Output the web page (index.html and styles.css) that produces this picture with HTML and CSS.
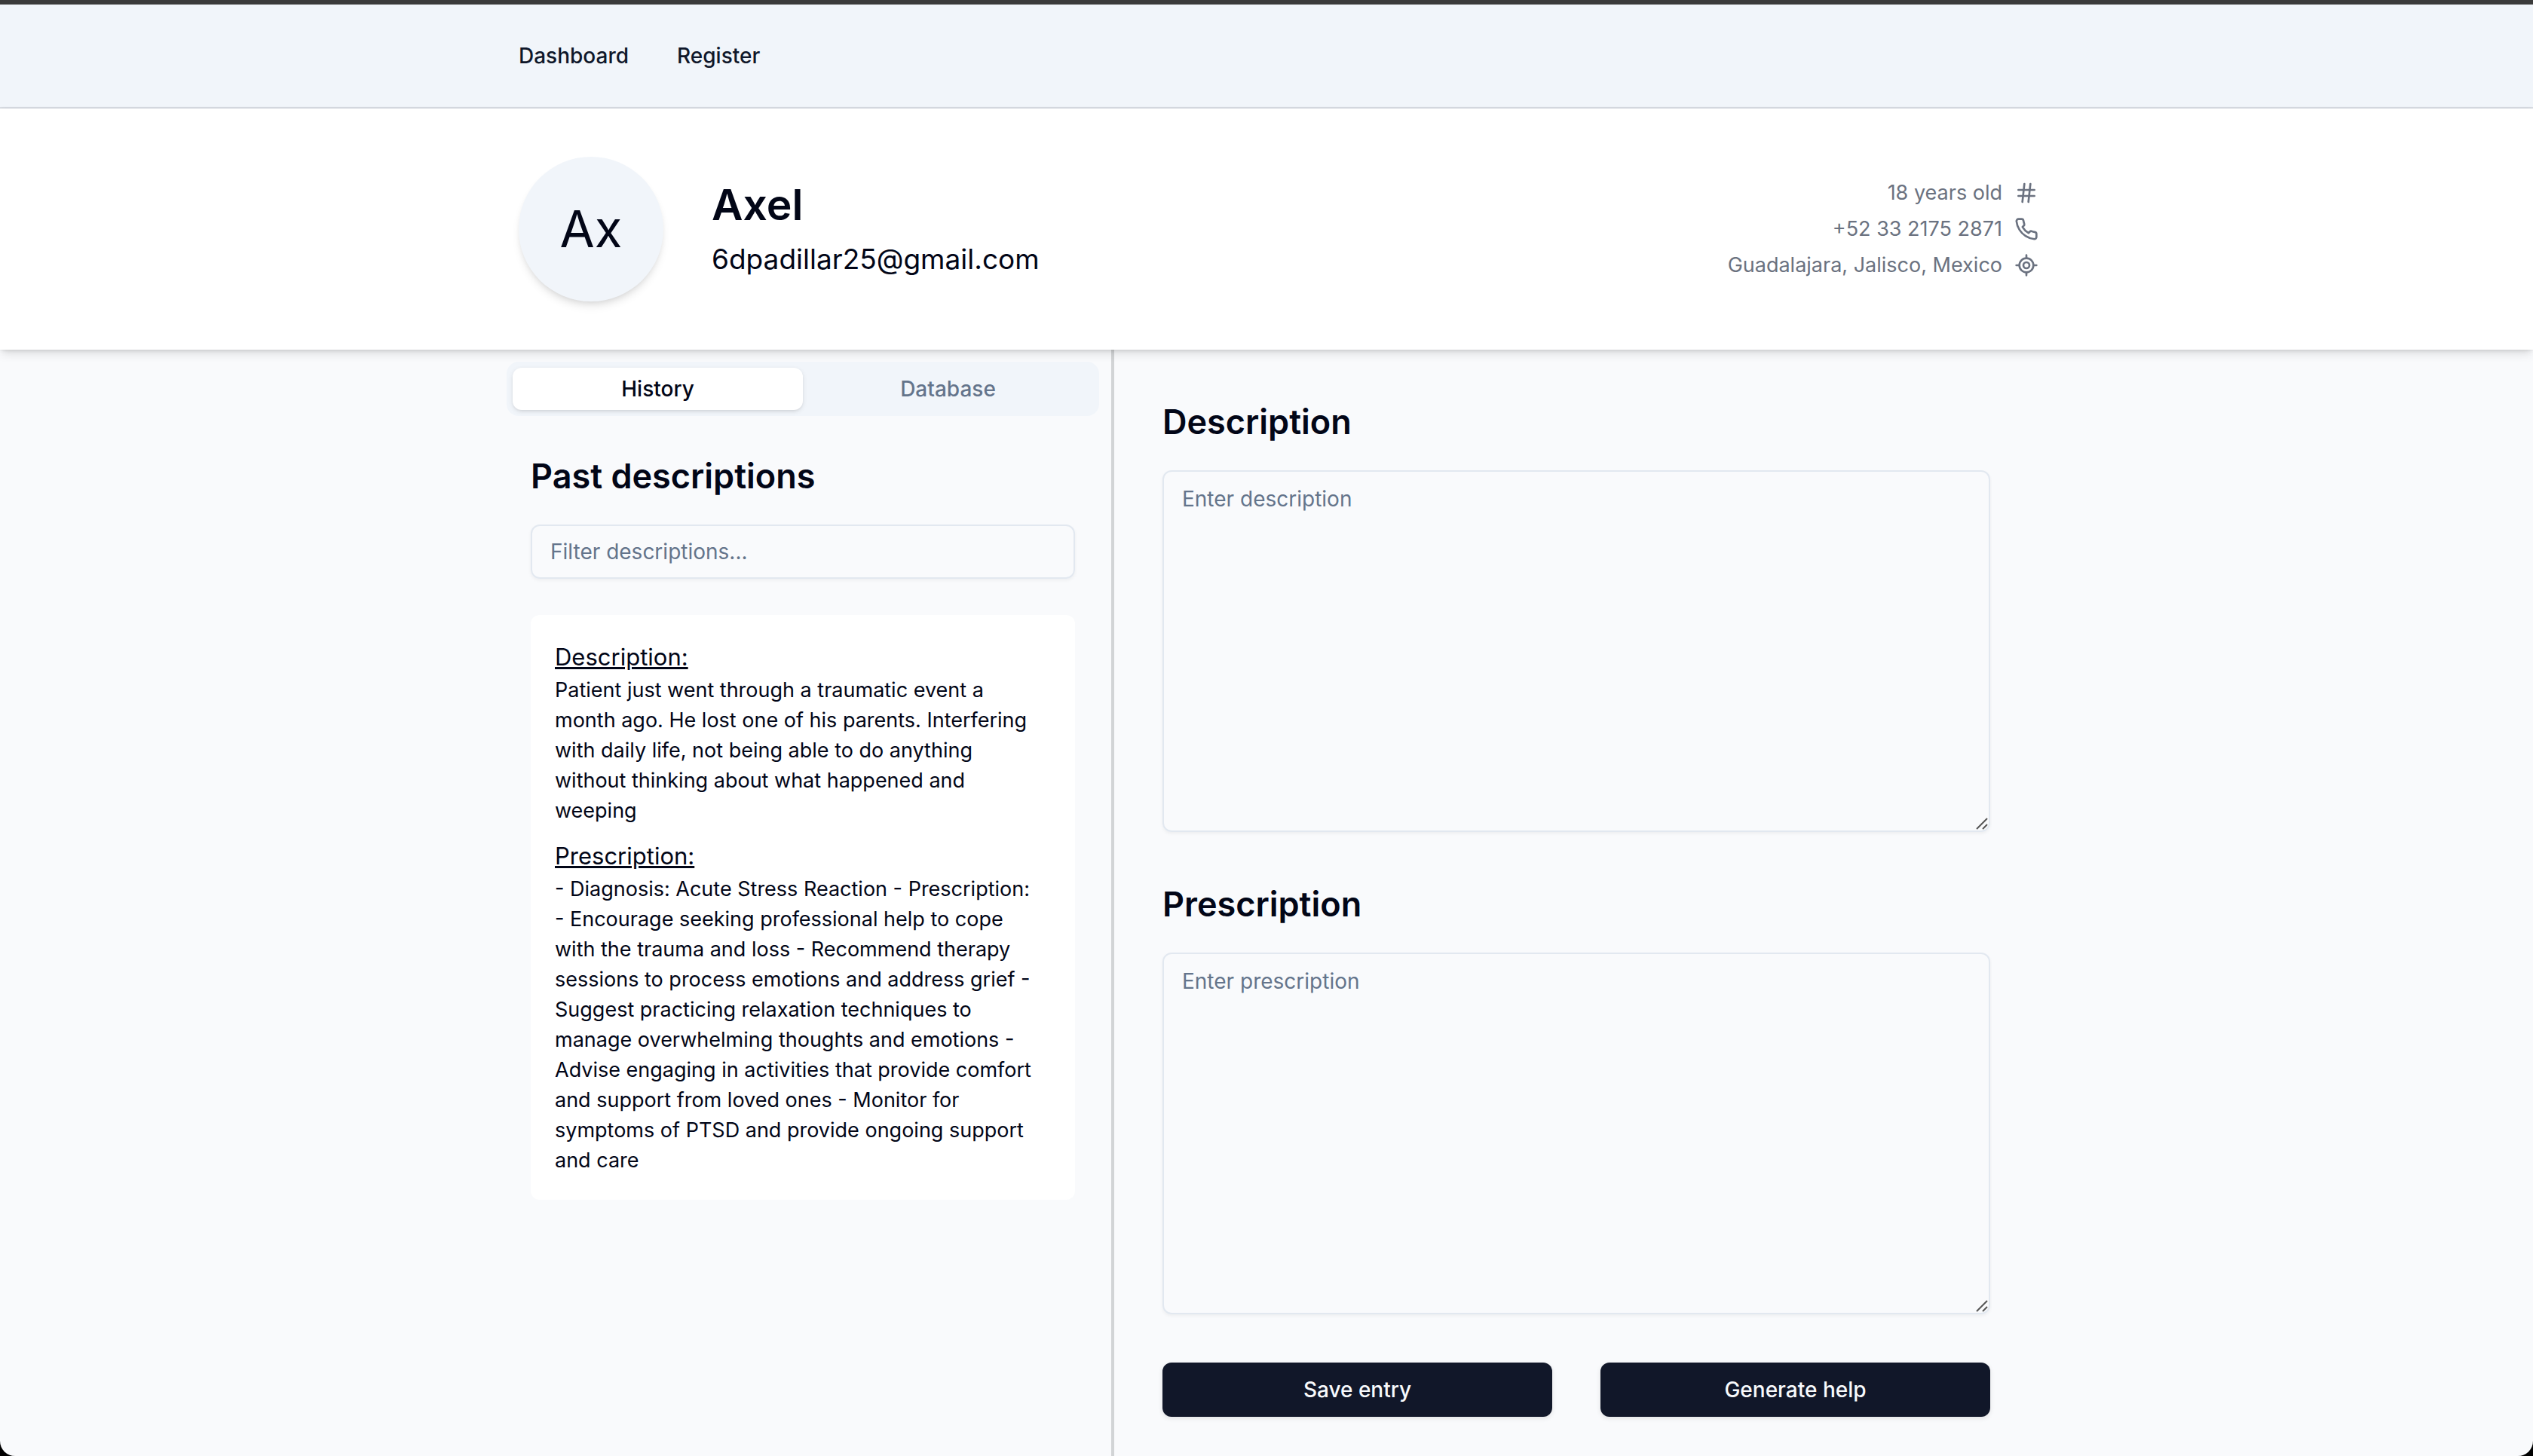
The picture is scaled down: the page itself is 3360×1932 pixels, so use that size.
FILE: index.html
```html
<!DOCTYPE html>
<html lang="en">
<head>
<meta charset="utf-8">
<meta name="viewport" content="width=device-width, initial-scale=1">
<title>Axel</title>
<link rel="stylesheet" href="styles.css">
</head>
<body>
<header class="topbar">
  <nav class="container topbar-nav">
    <a class="nav-link" href="#dashboard">Dashboard</a>
    <a class="nav-link" href="#register">Register</a>
  </nav>
</header>

<section class="profile">
  <div class="container profile-inner">
    <div class="avatar">Ax</div>
    <div class="identity">
      <h1 class="name">Axel</h1>
      <p class="email">6dpadillar25@gmail.com</p>
    </div>
    <ul class="facts">
      <li class="fact">18 years old
        <svg class="icon" viewBox="0 0 24 24" aria-hidden="true"><path d="M4 9h16M4 15h16M10 3L8 21M16 3l-2 18"/></svg>
      </li>
      <li class="fact">+52 33 2175 2871
        <svg class="icon" viewBox="0 0 24 24" aria-hidden="true"><path d="M22 16.92v3a2 2 0 0 1-2.18 2 19.79 19.79 0 0 1-8.63-3.07 19.5 19.5 0 0 1-6-6 19.79 19.79 0 0 1-3.07-8.67A2 2 0 0 1 4.11 2h3a2 2 0 0 1 2 1.72 12.84 12.84 0 0 0 .7 2.81 2 2 0 0 1-.45 2.11L8.09 9.91a16 16 0 0 0 6 6l1.27-1.27a2 2 0 0 1 2.11-.45 12.84 12.84 0 0 0 2.81.7A2 2 0 0 1 22 16.92z"/></svg>
      </li>
      <li class="fact">Guadalajara, Jalisco, Mexico
        <svg class="icon" viewBox="0 0 24 24" aria-hidden="true"><path d="M2 12h3M19 12h3M12 2v3M12 19v3"/><circle cx="12" cy="12" r="7"/><circle cx="12" cy="12" r="3"/></svg>
      </li>
    </ul>
  </div>
</section>

<main class="container workspace">
  <section class="history">
    <div class="tabs" role="tablist">
      <button class="tab tab-active" type="button" role="tab" aria-selected="true">History</button>
      <button class="tab" type="button" role="tab" aria-selected="false">Database</button>
    </div>
    <div class="history-body">
      <h2 class="heading"><label for="filter">Past descriptions</label></h2>
      <input class="field filter" id="filter" type="text" placeholder="Filter descriptions...">
      <article class="entry">
        <h3 class="entry-label">Description:</h3>
        <p class="entry-text">Patient just went through a traumatic event a month ago. He lost one of his parents. Interfering with daily life, not being able to do anything without thinking about what happened and weeping</p>
        <h3 class="entry-label entry-label-next">Prescription:</h3>
        <p class="entry-text">- Diagnosis: Acute Stress Reaction - Prescription: - Encourage seeking professional help to cope with the trauma and loss - Recommend therapy sessions to process emotions and address grief - Suggest practicing relaxation techniques to manage overwhelming thoughts and emotions - Advise engaging in activities that provide comfort and support from loved ones - Monitor for symptoms of PTSD and provide ongoing support and care</p>
      </article>
    </div>
  </section>

  <form class="editor">
    <div class="group">
      <h2 class="heading"><label for="description">Description</label></h2>
      <textarea class="field area" id="description" placeholder="Enter description"></textarea>
    </div>
    <div class="group">
      <h2 class="heading"><label for="prescription">Prescription</label></h2>
      <textarea class="field area" id="prescription" placeholder="Enter prescription"></textarea>
    </div>
    <div class="actions">
      <button class="button" type="button">Save entry</button>
      <button class="button" type="button">Generate help</button>
    </div>
  </form>
</main>
</body>
</html>
```
FILE: styles.css
```css
*,
*::before,
*::after {
  box-sizing: border-box;
}

html {
  background: #000;
}

body {
  display: flex;
  flex-direction: column;
  min-height: 100vh;
  margin: 0;
  overflow: hidden;
  border-radius: 0 0 20px 20px;
  background: #f9fafc;
  color: #020617;
  font-family: Inter, "Liberation Sans", sans-serif;
  font-size: 28px;
  line-height: 40px;
}

h1,
h2,
h3,
p,
ul {
  margin: 0;
  padding: 0;
  font-weight: 400;
}

button,
input,
textarea {
  margin: 0;
  font: inherit;
}

.container {
  width: 100%;
  max-width: 2048px;
  margin: 0 auto;
}

.topbar {
  border-top: 6px solid #3b3b3b;
  border-bottom: 2px solid #dadee5;
  background: #f1f5fa;
}

.topbar-nav {
  display: flex;
  gap: 64px;
  padding: 48px 32px;
}

.nav-link {
  color: #0f172a;
  font-weight: 500;
  text-decoration: none;
}

.profile {
  z-index: 1;
  background: #fff;
  box-shadow: 0 8px 12px -2px rgb(0 0 0 / 0.1), 0 4px 8px -4px rgb(0 0 0 / 0.1), 0 0 4px rgb(0 0 0 / 0.1);
}

.profile-inner {
  display: flex;
  align-items: center;
  gap: 64px;
  padding: 64px 0 64px 32px;
}

.avatar {
  display: grid;
  place-items: center;
  width: 192px;
  height: 192px;
  border-radius: 50%;
  background: #f1f5fa;
  box-shadow: 0 8px 12px -2px rgb(0 0 0 / 0.1), 0 4px 8px -4px rgb(0 0 0 / 0.1);
  font-size: 67px;
  line-height: 80px;
}

.name {
  font-size: 57px;
  font-weight: 600;
  line-height: 72px;
}

.email {
  margin-top: 8px;
  font-size: 37px;
  line-height: 56px;
}

.facts {
  margin-left: auto;
  color: #6b7280;
  font-size: 27px;
  line-height: 48px;
  list-style: none;
}

.fact {
  display: flex;
  align-items: center;
  justify-content: flex-end;
  gap: 16px;
}

.icon {
  width: 32px;
  height: 32px;
  fill: none;
  stroke: currentColor;
  stroke-linecap: round;
  stroke-linejoin: round;
  stroke-width: 2;
}

.workspace {
  display: grid;
  flex: 1;
  grid-template-columns: 822fr 1226fr;
}

.history {
  padding: 16px;
  border-right: 4px solid #d2d4d6;
}

.tabs {
  display: grid;
  grid-template-columns: 1fr 1fr;
  padding: 8px;
  border-radius: 16px;
  background: #f1f5fa;
}

.tab {
  padding: 8px 24px;
  border: 0;
  border-radius: 12px;
  background: none;
  color: #64748b;
  font-weight: 500;
}

.tab-active {
  background: #fff;
  box-shadow: 0 2px 6px rgb(0 0 0 / 0.1), 0 2px 4px -2px rgb(0 0 0 / 0.1);
  color: #020617;
}

.history-body {
  padding: 48px 32px;
}

.heading {
  margin-bottom: 32px;
  font-size: 45px;
  font-weight: 600;
  line-height: 64px;
}

.field {
  display: block;
  width: 100%;
  border: 2px solid #e2e8f0;
  border-radius: 12px;
  background: transparent;
  box-shadow: 0 2px 4px rgb(0 0 0 / 0.05);
  color: inherit;
}

.field::placeholder {
  color: #64748b;
  opacity: 1;
}

.filter {
  padding: 14px 24px;
}

.entry {
  margin-top: 48px;
  padding: 32px 48px 32px 32px;
  border-radius: 12px;
  background: #fff;
}

.entry-label {
  font-size: 31px;
  line-height: 48px;
  text-decoration: underline;
}

.entry-label-next {
  margin-top: 16px;
}

.entry-text {
  font-size: 27px;
}

.editor {
  display: flex;
  flex-direction: column;
  gap: 64px;
  padding: 64px 64px 48px;
}

.area {
  height: 480px;
  padding: 16px 24px;
  background: url("data:image/svg+xml,%3Csvg xmlns='http://www.w3.org/2000/svg' width='18' height='18'%3E%3Cpath d='M2 16L16 2M10 16l6-6' stroke='%23555' stroke-width='2'/%3E%3C/svg%3E") right bottom no-repeat;
  resize: vertical;
}

.area::-webkit-resizer {
  background: transparent;
}

.actions {
  display: grid;
  grid-template-columns: 1fr 1fr;
  gap: 64px;
}

.button {
  padding: 16px 32px;
  border: 0;
  border-radius: 12px;
  background: #111729;
  box-shadow: 0 2px 6px rgb(0 0 0 / 0.1);
  color: #f8fafc;
  font-weight: 500;
}
```
